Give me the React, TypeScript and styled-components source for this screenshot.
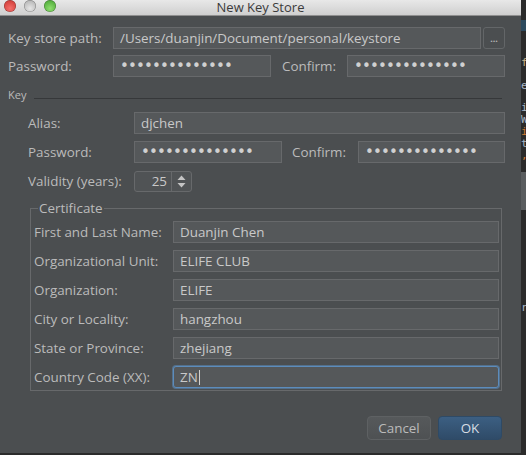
import React from "react";
import styled, { createGlobalStyle } from "styled-components";

const Global = createGlobalStyle`
  html, body { margin: 0; padding: 0; background: #2b2b2b; }
  body { font-family: "Open Sans", "Liberation Sans", sans-serif; }
  * { box-sizing: border-box; }
`;

const Screen = styled.div`
  display: flex;
  align-items: flex-start;
  width: 526px;
  height: 455px;
  overflow: hidden;
  background: #2b2b2b;
`;

const Dialog = styled.div`
  width: 521px;
  height: 453px;
  flex: none;
  display: flex;
  flex-direction: column;
  background: #4b4e50;
  color: #bbbbbb;
  font-size: 13.4px;
`;

const TitleBar = styled.div`
  height: 16px;
  flex: none;
  display: grid;
  grid-template-columns: 1fr auto 1fr;
  align-items: start;
  background: linear-gradient(#e8e8e8, #cfcfcf);
  border-bottom: 1px solid #8f8f8f;
`;

const Lights = styled.div`
  display: flex;
  gap: 8px;
  padding-left: 4px;
`;

const Light = styled.span<{ $c: string; $d: string }>`
  width: 12px;
  height: 12px;
  border-radius: 50%;
  background: radial-gradient(circle at 50% 70%, ${(p) => p.$c} 0%, ${(p) => p.$d} 100%);
  box-shadow: inset 0 0 0 0.5px rgba(0, 0, 0, 0.35);
`;

const Title = styled.div`
  font-size: 13px;
  line-height: 15px;
  color: #3b3b3b;
`;

const Body = styled.div`
  display: flex;
  flex-direction: column;
  padding: 11px 16px 0 8px;
`;

const Row = styled.div<{ $mt?: number }>`
  display: flex;
  align-items: center;
  height: 22px;
  margin-top: ${(p) => p.$mt ?? 0}px;
`;

const Label = styled.div<{ $w: number; $ml?: number }>`
  width: ${(p) => p.$w}px;
  margin-left: ${(p) => p.$ml ?? 0}px;
  flex: none;
  white-space: nowrap;
  color: #bbbbbb;
`;

const Field = styled.div<{ $w?: number; $focus?: boolean }>`
  ${(p) => (p.$w ? `width: ${p.$w}px; flex: none;` : "flex: 1;")}
  height: 22px;
  display: flex;
  align-items: center;
  padding: 0 6px;
  background: #55585a;
  border: 1px solid ${(p) => (p.$focus ? "#5c8cbc" : "#67696b")};
  border-radius: ${(p) => (p.$focus ? 3 : 0)}px;
  box-shadow: ${(p) => (p.$focus ? "0 0 0 1px rgba(92,140,188,0.55)" : "none")};
  color: #c9c9c9;
  white-space: nowrap;
  overflow: hidden;
`;

const Dots = styled.span`
  font-family: "DejaVu Sans", sans-serif;
  font-size: 15px;
  letter-spacing: -0.85px;
  color: #d0d0d0;
`;

const Caret = styled.span`
  display: inline-block;
  width: 1px;
  height: 15px;
  margin-left: 1px;
  background: #d0d0d0;
`;

const SmallButton = styled.div`
  width: 22px;
  height: 22px;
  margin-left: 2px;
  flex: none;
  border: 1px solid #636668;
  border-radius: 3px;
  display: flex;
  align-items: center;
  justify-content: center;
  font-size: 9px;
  font-weight: 700;
  color: #b5b5b5;
  line-height: 1;
`;

const SectionHeader = styled.div`
  display: flex;
  align-items: center;
  height: 12px;
  margin-top: 12px;
  font-size: 11px;
  line-height: 12px;
`;

const SectionLine = styled.div`
  flex: 1;
  height: 1px;
  margin: 7px 3px 0 8px;
  background: #36383a;
`;

const KeyBlock = styled.div`
  display: flex;
  flex-direction: column;
  padding-left: 20px;
  margin-top: 11px;
`;

const Spinner = styled.div`
  width: 58px;
  height: 21px;
  flex: none;
  display: flex;
  border: 1px solid #67696b;
  border-radius: 3px;
  background: #505355;
`;

const SpinValue = styled.div`
  flex: 1;
  text-align: right;
  padding-right: 4px;
  line-height: 19px;
  color: #c9c9c9;
`;

const SpinArrows = styled.div`
  width: 20px;
  border-left: 1px solid #67696b;
  display: flex;
  align-items: center;
  justify-content: center;
`;

const Group = styled.fieldset`
  margin: 7px 3px 0 22px;
  padding: 4px 2px 2px 3px;
  border: 1px solid #67696b;
  min-width: 0;
`;

const Legend = styled.legend`
  padding: 0 1px;
  margin-left: 4px;
  font-size: 13.4px;
  line-height: 18px;
  color: #bbbbbb;
`;

const GroupRows = styled.div`
  display: flex;
  flex-direction: column;
  gap: 7px;
`;

const Buttons = styled.div`
  display: flex;
  justify-content: flex-end;
  gap: 7px;
  margin: 25px 3px 0 0;
`;

const Button = styled.div<{ $primary?: boolean }>`
  width: 64px;
  height: 24px;
  border-radius: 4px;
  display: flex;
  align-items: center;
  justify-content: center;
  font-size: 13.4px;
  color: ${(p) => (p.$primary ? "#d6dde4" : "#bbbbbb")};
  border: 1px solid ${(p) => (p.$primary ? "#2e4a66" : "#5e6163")};
  background: ${(p) =>
    p.$primary
      ? "linear-gradient(#3c5f82, #2f4b68)"
      : "linear-gradient(#56595b, #4e5153)"};
`;

const Strip = styled.div`
  flex: 1;
  height: 455px;
  display: flex;
  flex-direction: column;
  overflow: hidden;
  background: #2b2b2b;
  font-family: "DejaVu Sans Mono", monospace;
  font-size: 11px;
`;

const CodeLine = styled.div<{ $c: string; $h: number; $bg?: string }>`
  height: ${(p) => p.$h}px;
  line-height: ${(p) => p.$h}px;
  color: ${(p) => p.$c};
  background: ${(p) => p.$bg ?? "transparent"};
  white-space: nowrap;
`;

const codeLines = [
  { t: "", c: "#999", h: 20 },
  { t: "", c: "#999", h: 11, bg: "#2d4a5e" },
  { t: "", c: "#999", h: 25 },
  { t: "fa", c: "#c9b38a", h: 14 },
  { t: "", c: "#999", h: 10 },
  { t: "e", c: "#a9b7c6", h: 12 },
  { t: "", c: "#999", h: 10 },
  { t: "i", c: "#a9b7c6", h: 12 },
  { t: "W", c: "#a9b7c6", h: 12 },
  { t: "i", c: "#cc7832", h: 12 },
  { t: "t", c: "#a9b7c6", h: 12 },
  { t: ",", c: "#cc7832", h: 12 },
  { t: "", c: "#999", h: 10 },
  { t: "", c: "#999", h: 38, bg: "#5a5d5f" },
  { t: "", c: "#999", h: 92 },
  { t: "r", c: "#a9b7c6", h: 12 },
];

const Arrows = () => (
  <svg width="9" height="13" viewBox="0 0 9 13">
    <path d="M4.5 0.5 L8.5 5 L0.5 5 Z" fill="#c4c4c4" />
    <path d="M4.5 12.5 L8.5 8 L0.5 8 Z" fill="#c4c4c4" />
  </svg>
);

const pwd = "\u2022".repeat(14);

const certRows: { label: string; value: string; focus?: boolean }[] = [
  { label: "First and Last Name:", value: "Duanjin Chen" },
  { label: "Organizational Unit:", value: "ELIFE CLUB" },
  { label: "Organization:", value: "ELIFE" },
  { label: "City or Locality:", value: "hangzhou" },
  { label: "State or Province:", value: "zhejiang" },
  { label: "Country Code (XX):", value: "ZN", focus: true },
];

export default function App() {
  return (
    <>
      <Global />
      <Screen>
        <Dialog>
          <TitleBar>
            <Lights>
              <Light $c="#f4706b" $d="#c8312c" />
              <Light $c="#e6e6e6" $d="#a9a9a9" />
              <Light $c="#8fde6f" $d="#3f9d2c" />
            </Lights>
            <Title>New Key Store</Title>
            <div />
          </TitleBar>
          <Body>
            <Row>
              <Label $w={105}>Key store path:</Label>
              <Field>/Users/duanjin/Document/personal/keystore</Field>
              <SmallButton>...</SmallButton>
            </Row>
            <Row $mt={6}>
              <Label $w={105}>Password:</Label>
              <Field $w={158}>
                <Dots>{pwd}</Dots>
              </Field>
              <Label $w={65} $ml={11}>
                Confirm:
              </Label>
              <Field>
                <Dots>{pwd}</Dots>
              </Field>
            </Row>
            <SectionHeader>
              Key
              <SectionLine />
            </SectionHeader>
            <KeyBlock>
              <Row>
                <Label $w={106}>Alias:</Label>
                <Field>djchen</Field>
              </Row>
              <Row $mt={7}>
                <Label $w={106}>Password:</Label>
                <Field $w={148}>
                  <Dots>{pwd}</Dots>
                </Field>
                <Label $w={66} $ml={10}>
                  Confirm:
                </Label>
                <Field>
                  <Dots>{pwd}</Dots>
                </Field>
              </Row>
              <Row $mt={7}>
                <Label $w={106}>Validity (years):</Label>
                <Spinner>
                  <SpinValue>25</SpinValue>
                  <SpinArrows>
                    <Arrows />
                  </SpinArrows>
                </Spinner>
              </Row>
            </KeyBlock>
            <Group>
              <Legend>Certificate</Legend>
              <GroupRows>
                {certRows.map((r) => (
                  <Row key={r.label}>
                    <Label $w={139}>{r.label}</Label>
                    <Field $focus={r.focus}>
                      {r.value}
                      {r.focus && <Caret />}
                    </Field>
                  </Row>
                ))}
              </GroupRows>
            </Group>
            <Buttons>
              <Button>Cancel</Button>
              <Button $primary>OK</Button>
            </Buttons>
          </Body>
        </Dialog>
        <Strip>
          {codeLines.map((l, i) => (
            <CodeLine key={i} $c={l.c} $h={l.h} $bg={l.bg}>
              {l.t}
            </CodeLine>
          ))}
        </Strip>
      </Screen>
    </>
  );
}
